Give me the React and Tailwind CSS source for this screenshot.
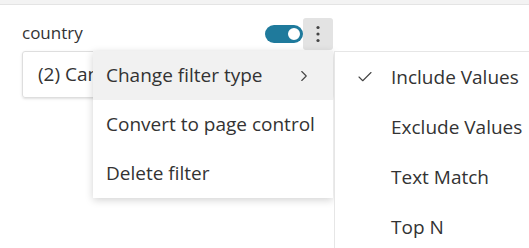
import React from "react";
import { Check, ChevronRight } from "lucide-react";

const font = "font-['Open_Sans','Noto_Sans',sans-serif]";

function Toggle() {
  return (
    <div className="relative w-[38px] h-[18px] rounded-full bg-[#1f7a9c]">
      <div className="absolute right-[1px] top-[1px] w-[16px] h-[16px] rounded-full bg-white border-2 border-[#1f7a9c]" />
    </div>
  );
}

function Kebab() {
  return (
    <div className="w-[30px] h-[32px] bg-[#e3e3e3] rounded-[3px] flex items-center justify-center">
      <svg width="4" height="18" viewBox="0 0 4 18">
        <circle cx="2" cy="2.5" r="1.6" fill="#444" />
        <circle cx="2" cy="9" r="1.6" fill="#444" />
        <circle cx="2" cy="15.5" r="1.6" fill="#444" />
      </svg>
    </div>
  );
}

const menuItems = ["Change filter type", "Convert to page control", "Delete filter"];
const subItems = ["Include Values", "Exclude Values", "Text Match", "Top N"];

export default function App() {
  return (
    <div className={`relative w-[529px] h-[248px] bg-white overflow-hidden ${font}`}>
      <div className="h-[5px] bg-[#f3f3f3] border-b border-[#e4e4e4]" />
      <div className="w-[333px] pl-[22px] pt-[13px]">
        <div className="flex items-center justify-between h-[32px]">
          <span className="text-[17px] text-[#333] pb-[2px]">country</span>
          <div className="flex items-center">
            <Toggle />
            <Kebab />
          </div>
        </div>
        <div className="mt-[1px] h-[47px] border border-[#dedede] rounded-[3px] shadow-sm pl-[15px] flex items-center text-[19px] text-[#333]">
          <span className="w-[55px] overflow-hidden whitespace-nowrap">(2) Canada</span>
        </div>
      </div>

      <div className="absolute left-[93px] top-[51px] w-[240px] bg-white shadow-[0_2px_8px_rgba(0,0,0,0.18)]">
        {menuItems.map((item, i) => (
          <div
            key={item}
            className={`h-[49px] pl-[13px] pr-[20px] flex items-center justify-between text-[19px] text-[#333] whitespace-nowrap ${i === 0 ? "bg-[#f1f1f1]" : ""}`}
          >
            <span>{item}</span>
            {i === 0 && <ChevronRight className="w-[18px] h-[18px] text-[#444]" strokeWidth={1.5} />}
          </div>
        ))}
      </div>

      <div className="absolute left-[334px] top-[51px] w-[210px] h-[210px] bg-white border-l border-t border-[#e6e6e6]">
        {subItems.map((item, i) => (
          <div key={item} className="h-[50px] flex items-center text-[19px] text-[#333]">
            <div className="w-[56px] flex justify-end pr-[17px]">
              {i === 0 && <Check className="w-[18px] h-[18px] text-[#444]" strokeWidth={1.5} />}
            </div>
            <span className="whitespace-nowrap">{item}</span>
          </div>
        ))}
      </div>
    </div>
  );
}
